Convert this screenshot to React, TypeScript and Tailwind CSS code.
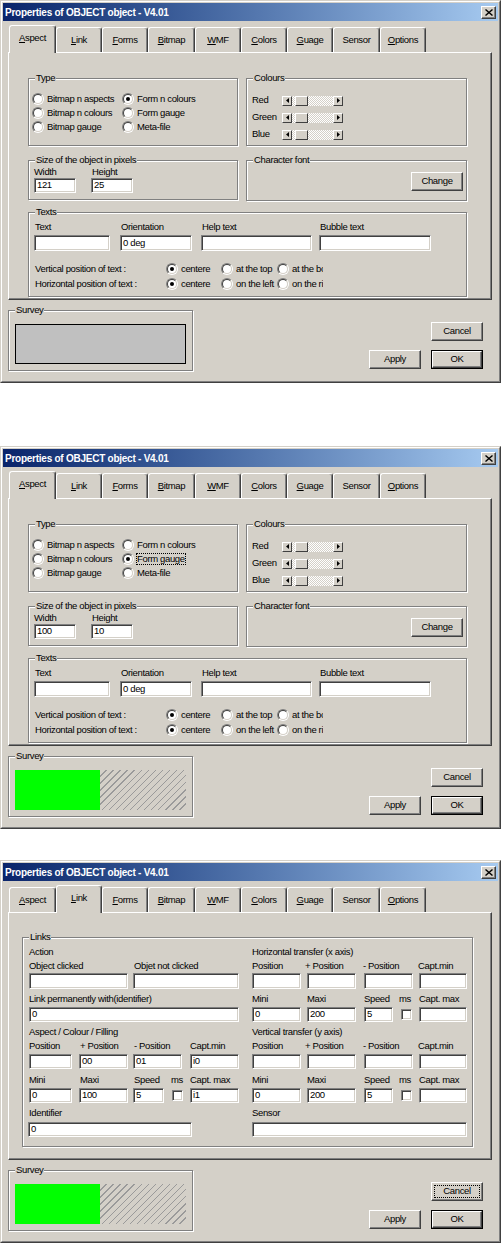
import type { ReactNode } from 'react';

type Tab = 'aspect' | 'link';

const TABS: { key: string; u: string; rest: string; w: string }[] = [
  { key: 'aspect', u: 'A', rest: 'spect', w: 'w-[47px]' },
  { key: 'link', u: 'L', rest: 'ink', w: 'w-[46px]' },
  { key: 'forms', u: 'F', rest: 'orms', w: 'w-[46px]' },
  { key: 'bitmap', u: 'B', rest: 'itmap', w: 'w-[47px]' },
  { key: 'wmf', u: 'W', rest: 'MF', w: 'w-[46px]' },
  { key: 'colors', u: 'C', rest: 'olors', w: 'w-[46px]' },
  { key: 'guage', u: 'G', rest: 'uage', w: 'w-[46px]' },
  { key: 'sensor', u: '', rest: 'Sensor', w: 'w-[47px]' },
  { key: 'options', u: 'O', rest: 'ptions', w: 'w-[46px]' },
];

function Group({ label, className = '', children }: { label: string; className?: string; children?: ReactNode }) {
  return (
    <div className={`relative shrink-0 border border-[#808080] shadow-[inset_1px_1px_0_#fff,1px_1px_0_#fff] ${className}`}>
      <span className="absolute -top-[7px] left-[6px] bg-[#d4d0c8] px-[1px] leading-[12px] whitespace-nowrap">{label}</span>
      {children}
    </div>
  );
}

function Edit({ value = '', className = '' }: { value?: string; className?: string }) {
  return (
    <div
      className={`shrink-0 flex items-center overflow-hidden whitespace-nowrap bg-white pl-[2px] border border-t-[#808080] border-l-[#808080] border-r-white border-b-white shadow-[inset_1px_1px_0_#404040,inset_-1px_-1px_0_#d4d0c8] ${className}`}
    >
      {value}
    </div>
  );
}

function Check({ className = '' }: { className?: string }) {
  return (
    <div
      className={`shrink-0 w-[11px] h-[11px] bg-white border border-t-[#808080] border-l-[#808080] border-r-white border-b-white shadow-[inset_1px_1px_0_#404040,inset_-1px_-1px_0_#d4d0c8] ${className}`}
    />
  );
}

function Radio({ label, checked, focus, className = '' }: { label: string; checked?: boolean; focus?: boolean; className?: string }) {
  return (
    <div className={`flex h-[14px] items-center whitespace-nowrap overflow-hidden ${className}`}>
      <span className="shrink-0 flex w-[12px] h-[12px] rounded-full border border-t-[#808080] border-l-[#808080] border-r-white border-b-white">
        <span className="flex flex-1 items-center justify-center rounded-full bg-white border border-t-[#404040] border-l-[#404040] border-r-[#d4d0c8] border-b-[#d4d0c8]">
          {checked && <span className="w-[4px] h-[4px] rounded-full bg-black" />}
        </span>
      </span>
      <span className={`ml-[2px] px-[1px] leading-[12px] ${focus ? 'outline outline-1 outline-dotted outline-black -outline-offset-1' : ''}`}>
        {label}
      </span>
    </div>
  );
}

function Button({ label, isDefault, focus, className = '' }: { label: string; isDefault?: boolean; focus?: boolean; className?: string }) {
  return (
    <div className={`shrink-0 ${isDefault ? 'border border-black' : ''} ${className}`}>
      <div className="relative flex h-full items-center justify-center border border-t-white border-l-white border-r-[#404040] border-b-[#404040] shadow-[inset_-1px_-1px_0_#808080]">
        {focus && <span className="absolute inset-[2px] border border-dotted border-black" />}
        {label}
      </div>
    </div>
  );
}

function Arrow({ left }: { left?: boolean }) {
  return (
    <div className="flex w-[10px] h-full items-center justify-center border border-t-white border-l-white border-r-[#404040] border-b-[#404040]">
      <svg width="3" height="5" viewBox="0 0 3 5">
        <path d={left ? 'M3 0V5L0 2.5Z' : 'M0 0V5L3 2.5Z'} fill="#000" />
      </svg>
    </div>
  );
}

function Scroll() {
  return (
    <div className="flex h-[10px] w-[61px]">
      <Arrow left />
      <div className="w-[3px] bg-[repeating-conic-gradient(#fff_0_25%,#d4d0c8_0_50%)] bg-[length:2px_2px]" />
      <div className="w-[13px] border border-t-white border-l-white border-r-[#404040] border-b-[#404040]" />
      <div className="flex-1 bg-[repeating-conic-gradient(#fff_0_25%,#d4d0c8_0_50%)] bg-[length:2px_2px]" />
      <Arrow />
    </div>
  );
}

function L({ children, className = '' }: { children: ReactNode; className?: string }) {
  return <span className={`block shrink-0 h-[14px] leading-[14px] whitespace-nowrap ${className}`}>{children}</span>;
}

function AspectPage({ gauge, w, h }: { gauge: boolean; w: string; h: string }) {
  return (
    <div className="flex flex-col pl-[19px] pt-[25px]">
      <div className="flex gap-[8px]">
        <Group label="Type" className="w-[210px] h-[68px]">
          <div className="grid grid-cols-[90px_1fr] pl-[3px] pt-[13px]">
            <Radio label="Bitmap n aspects" />
            <Radio label="Form n colours" checked={!gauge} />
            <Radio label="Bitmap n colours" />
            <Radio label="Form gauge" checked={gauge} focus={gauge} />
            <Radio label="Bitmap gauge" />
            <Radio label="Meta-file" />
          </div>
        </Group>
        <Group label="Colours" className="w-[221px] h-[68px]">
          <div className="flex flex-col gap-[6px] pl-[5px] pt-[16px]">
            {['Red', 'Green', 'Blue'].map((c) => (
              <div key={c} className="flex h-[11px] items-center">
                <span className="w-[30px]">{c}</span>
                <Scroll />
              </div>
            ))}
          </div>
        </Group>
      </div>

      <div className="mt-[14px] flex gap-[8px]">
        <Group label="Size of the object in pixels" className="w-[210px] h-[40px]">
          <div className="flex gap-[15px] pl-[5px] pt-[5px]">
            <div className="flex flex-col">
              <span className="h-[12px] leading-[12px]">Width</span>
              <Edit value={w} className="w-[42px] h-[15px]" />
            </div>
            <div className="flex flex-col">
              <span className="h-[12px] pl-[1px] leading-[12px]">Height</span>
              <Edit value={h} className="w-[42px] h-[15px]" />
            </div>
          </div>
        </Group>
        <Group label="Character font" className="w-[221px] h-[41px]">
          <Button label="Change" className="ml-[164px] mt-[11px] w-[52px] h-[19px]" />
        </Group>
      </div>

      <Group label="Texts" className="mt-[11px] w-[439px] h-[85px]">
        <div className="flex pl-[5px] pt-[8px]">
          {[
            { l: 'Text', v: '', w: 'w-[76px]', m: '' },
            { l: 'Orientation', v: '0 deg', w: 'w-[72px]', m: 'ml-[10px]' },
            { l: 'Help text', v: '', w: 'w-[111px]', m: 'ml-[9px]' },
            { l: 'Bubble text', v: '', w: 'w-[112px]', m: 'ml-[7px]' },
          ].map((c) => (
            <div key={c.l} className={`flex flex-col ${c.m}`}>
              <span className="h-[12px] pl-[1px] leading-[12px]">{c.l}</span>
              <Edit value={c.v} className={`mt-[2px] h-[16px] ${c.w}`} />
            </div>
          ))}
        </div>
        <div className="mt-[11px] flex pl-[6px]">
          <span className="w-[131px] leading-[14px]">Vertical position of text :</span>
          <Radio className="w-[55px]" label="centere" checked />
          <Radio className="w-[56px]" label="at the top" />
          <Radio className="w-[46px]" label="at the bottom" />
        </div>
        <div className="mt-[1px] flex pl-[6px]">
          <span className="w-[131px] leading-[14px]">Horizontal position of text :</span>
          <Radio className="w-[55px]" label="centere" checked />
          <Radio className="w-[56px]" label="on the left" />
          <Radio className="w-[46px]" label="on the right" />
        </div>
      </Group>
    </div>
  );
}

function LinkPage() {
  return (
    <div className="pl-[13px] pt-[24px]">
      <Group label="Links" className="w-[451px] h-[210px]">
        <div className="flex pt-[7px]">
          {/* colonne gauche */}
          <div className="ml-[6px] flex w-[211px] flex-col">
            <L>Action</L>
            <div className="flex">
              <L className="w-[105px]">Object clicked</L>
              <L>Objet not clicked</L>
            </div>
            <div className="flex gap-[5px]">
              <Edit className="w-[99px] h-[16px]" />
              <Edit className="w-[106px] h-[16px]" />
            </div>
            <L className="mt-[3px]">Link permanently with(identifier)</L>
            <Edit value="0" className="mt-[1px] w-[210px] h-[15px]" />
            <L className="mt-[3px]">Aspect / Colour / Filling</L>
            <div className="flex">
              <L className="w-[51px]">Position</L>
              <L className="w-[54px]">+ Position</L>
              <L className="w-[56px]">- Position</L>
              <L>Capt.min</L>
            </div>
            <div className="mt-[1px] flex">
              <Edit className="w-[43px] h-[15px]" />
              <Edit value="00" className="ml-[7px] w-[49px] h-[15px]" />
              <Edit value="01" className="ml-[5px] w-[49px] h-[15px]" />
              <Edit value="i0" className="ml-[8px] w-[49px] h-[15px]" />
            </div>
            <div className="mt-[4px] flex">
              <L className="w-[51px]">Mini</L>
              <L className="w-[54px]">Maxi</L>
              <L className="w-[37px]">Speed</L>
              <L className="w-[19px]">ms</L>
              <L>Capt. max</L>
            </div>
            <div className="mt-[1px] flex items-center">
              <Edit value="0" className="w-[43px] h-[15px]" />
              <Edit value="100" className="ml-[7px] w-[49px] h-[15px]" />
              <Edit value="5" className="ml-[5px] w-[31px] h-[15px]" />
              <Check className="ml-[8px]" />
              <Edit value="i1" className="ml-[7px] w-[49px] h-[15px]" />
            </div>
            <L className="mt-[3px]">Identifier</L>
            <Edit value="0" className="mt-[2px] -ml-[1px] w-[164px] h-[15px]" />
          </div>

          {/* colonne droite */}
          <div className="ml-[12px] flex w-[216px] flex-col">
            <L>Horizontal transfer (x axis)</L>
            <div className="flex">
              <L className="w-[53px]">Position</L>
              <L className="w-[58px]">+ Position</L>
              <L className="w-[55px]">- Position</L>
              <L>Capt.min</L>
            </div>
            <div className="flex">
              <Edit className="w-[49px] h-[16px]" />
              <Edit className="ml-[6px] w-[49px] h-[16px]" />
              <Edit className="ml-[8px] w-[49px] h-[16px]" />
              <Edit className="ml-[6px] w-[48px] h-[16px]" />
            </div>
            <div className="mt-[3px] flex">
              <L className="w-[55px]">Mini</L>
              <L className="w-[57px]">Maxi</L>
              <L className="w-[35px]">Speed</L>
              <L className="w-[20px]">ms</L>
              <L>Capt. max</L>
            </div>
            <div className="mt-[1px] flex items-center">
              <Edit value="0" className="w-[49px] h-[15px]" />
              <Edit value="200" className="ml-[6px] w-[49px] h-[15px]" />
              <Edit value="5" className="ml-[8px] w-[29px] h-[15px]" />
              <Check className="ml-[8px]" />
              <Edit className="ml-[7px] w-[48px] h-[15px]" />
            </div>
            <L className="mt-[3px]">Vertical transfer (y axis)</L>
            <div className="flex">
              <L className="w-[53px]">Position</L>
              <L className="w-[58px]">+ Position</L>
              <L className="w-[55px]">- Position</L>
              <L>Capt.min</L>
            </div>
            <div className="mt-[1px] flex">
              <Edit className="w-[49px] h-[15px]" />
              <Edit className="ml-[6px] w-[49px] h-[15px]" />
              <Edit className="ml-[8px] w-[49px] h-[15px]" />
              <Edit className="ml-[6px] w-[48px] h-[15px]" />
            </div>
            <div className="mt-[4px] flex">
              <L className="w-[55px]">Mini</L>
              <L className="w-[57px]">Maxi</L>
              <L className="w-[35px]">Speed</L>
              <L className="w-[20px]">ms</L>
              <L>Capt. max</L>
            </div>
            <div className="mt-[1px] flex items-center">
              <Edit value="0" className="w-[49px] h-[15px]" />
              <Edit value="200" className="ml-[6px] w-[49px] h-[15px]" />
              <Edit value="5" className="ml-[8px] w-[29px] h-[15px]" />
              <Check className="ml-[8px]" />
              <Edit className="ml-[7px] w-[48px] h-[15px]" />
            </div>
            <L className="mt-[3px]">Sensor</L>
            <Edit className="mt-[2px] w-[215px] h-[15px]" />
          </div>
        </div>
      </Group>
    </div>
  );
}

function Dialog({ tab, gauge, w = '', h = '', cancelFocus, className = '' }: { tab: Tab; gauge: boolean; w?: string; h?: string; cancelFocus?: boolean; className?: string }) {
  return (
    <div className={`w-[501px] h-[383px] shrink-0 border border-t-[#d4d0c8] border-l-[#d4d0c8] border-r-[#404040] border-b-[#404040] ${className}`}>
      <div className="flex h-full flex-col border border-t-white border-l-white border-r-[#808080] border-b-[#808080] bg-[#d4d0c8] p-[1px]">
        {/* barre de titre */}
        <div className="flex h-[18px] shrink-0 items-center bg-linear-to-r from-[#0a246a] to-[#a6caf0] pl-[2px] pr-[2px]">
          <span className="text-[10px] font-bold tracking-[-0.25px] text-white">Properties of OBJECT object - V4.01</span>
          <div className="ml-auto flex w-[15px] h-[13px] items-center justify-center bg-[#d4d0c8] border border-t-white border-l-white border-r-[#404040] border-b-[#404040] shadow-[inset_-1px_-1px_0_#808080]">
            <svg width="8" height="7" viewBox="0 0 8 7">
              <path d="M0.5 0.5L7.5 6.5M7.5 0.5L0.5 6.5" stroke="#000" strokeWidth="1.4" />
            </svg>
          </div>
        </div>

        {/* onglets */}
        <div className="mt-[4px] flex h-[27px] shrink-0 items-end pl-[6px]">
          {TABS.map((t) => {
            const sel = t.key === tab;
            return (
              <div
                key={t.key}
                className={`${t.w} flex items-center justify-center rounded-t-[3px] border-t border-l border-r border-t-white border-l-white border-r-[#404040] shadow-[inset_-1px_0_0_#808080] ${
                  sel ? 'relative z-10 -mb-[1px] h-[28px] bg-[#d4d0c8] pb-[2px]' : 'h-[25px]'
                }`}
              >
                <span>
                  {t.u && <span className="underline underline-offset-1">{t.u}</span>}
                  {t.rest}
                </span>
              </div>
            );
          })}
        </div>

        {/* page */}
        <div className="ml-[5px] w-[484px] h-[248px] shrink-0 border border-t-white border-l-white border-r-[#404040] border-b-[#404040] shadow-[inset_-1px_-1px_0_#808080]">
          {tab === 'aspect' ? <AspectPage gauge={gauge} w={w} h={h} /> : <LinkPage />}
        </div>

        {/* bas */}
        <div className="mt-[10px] flex">
          <Group label="Survey" className="ml-[5px] w-[185px] h-[61px]">
            {gauge ? (
              <div className="ml-[6px] mt-[13px] flex w-[171px] h-[40px]">
                <div className="w-[85px] bg-[#00ff00]" />
                <div className="flex-1 bg-[repeating-linear-gradient(135deg,transparent_0_4px,#9a9a9a_4px_5px)]" />
              </div>
            ) : (
              <div className="ml-[6px] mt-[13px] w-[171px] h-[40px] border border-black bg-[#c0c0c0]" />
            )}
          </Group>
          <div className="ml-auto mr-[15px] mt-[12px] flex flex-col items-end">
            <Button label="Cancel" focus={cancelFocus} className="w-[52px] h-[19px]" />
            <div className="mt-[9px] flex gap-[10px]">
              <Button label="Apply" className="w-[52px] h-[19px]" />
              <Button label="OK" isDefault className="w-[52px] h-[19px]" />
            </div>
          </div>
        </div>
      </div>
    </div>
  );
}

export default function App() {
  return (
    <div className="flex w-[501px] flex-col bg-white font-['Liberation_Sans',Arial,sans-serif] text-[9.5px] tracking-[-0.35px] text-black">
      <Dialog tab="aspect" gauge={false} w="121" h="25" />
      <Dialog tab="aspect" gauge w="100" h="10" className="mt-[63px]" />
      <Dialog tab="link" gauge cancelFocus className="mt-[31px]" />
    </div>
  );
}
